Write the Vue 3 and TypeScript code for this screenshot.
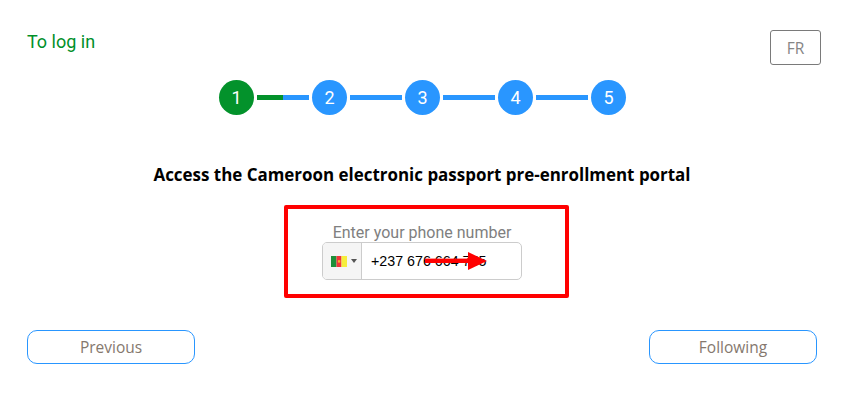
<script setup lang="ts">
const steps: number[] = [1, 2, 3, 4, 5];
</script>

<template>
  <div class="page">
    <header class="top">
      <a class="login">To log in</a>
      <button class="lang">FR</button>
    </header>

    <ol class="steps">
      <template v-for="n in steps" :key="n">
        <li class="circle" :class="{ active: n === 1 }">{{ n }}</li>
        <li v-if="n < 5" class="line" :class="{ half: n === 1 }"></li>
      </template>
    </ol>

    <h1 class="title">Access the Cameroon electronic passport pre-enrollment portal</h1>

    <section class="highlight">
      <label class="label">Enter your phone number</label>
      <div class="phone">
        <div class="flag-box">
          <svg class="flag" width="16" height="11" viewBox="0 0 16 11">
            <rect width="5.5" height="11" fill="#1f8f3a" />
            <rect x="5.5" width="5" height="11" fill="#f2343a" />
            <rect x="10.5" width="5.5" height="11" fill="#f6ee3c" />
            <rect x="6.9" y="4.2" width="2.4" height="2.4" fill="#f7b52e" />
          </svg>
          <span class="caret"></span>
        </div>
        <span class="number">+237 676 664 755</span>
        <svg class="arrow" width="64" height="18" viewBox="0 0 64 18">
          <rect x="0" y="6.6" width="45" height="4.4" fill="#ff0000" />
          <polygon points="43,0 62,9 43,18" fill="#ff0000" />
        </svg>
      </div>
    </section>

    <footer class="actions">
      <button class="nav">Previous</button>
      <button class="nav">Following</button>
    </footer>
  </div>
</template>

<style scoped>
.page {
  width: 864px;
  height: 416px;
  box-sizing: border-box;
  padding: 30px 47px 0 27px;
  background: #fff;
  font-family: Roboto, "Liberation Sans", sans-serif;
  overflow: hidden;
}
.top {
  display: flex;
  justify-content: space-between;
  align-items: flex-start;
  height: 35px;
  margin-right: -4px;
}
.login {
  color: #009029;
  font-size: 18px;
  line-height: 23px;
}
.lang {
  width: 51px;
  height: 35px;
  padding: 0;
  border: 1px solid #7a7a7a;
  border-radius: 3px;
  background: #fff;
  color: #858585;
  font-family: "Open Sans", sans-serif;
  font-size: 15.5px;
}
.steps {
  display: flex;
  align-items: center;
  justify-content: center;
  list-style: none;
  margin: 15px 0 0;
  padding: 0 0 0 1px;
}
.circle {
  width: 35px;
  height: 35px;
  border-radius: 50%;
  background: #2996ff;
  color: #fff;
  font-size: 18px;
  line-height: 35px;
  text-align: center;
}
.circle.active {
  background: #03922b;
}
.line {
  width: 52px;
  height: 5px;
  margin: 0 3px;
  background: #2996ff;
}
.line.half {
  background: linear-gradient(to right, #03922b 50%, #2996ff 50%);
}
.title {
  margin: 49px 0 0;
  text-align: center;
  color: #000;
  font-family: "Open Sans", sans-serif;
  font-size: 16.95px;
  font-weight: 700;
  line-height: 22px;
}
.highlight {
  width: 285px;
  height: 93px;
  box-sizing: border-box;
  margin: 19px 0 0 257px;
  border: 4px solid #ff0000;
  border-radius: 2px;
  display: flex;
  flex-direction: column;
  align-items: center;
  padding: 14px 9px 0 0;
}
.label {
  color: #808080;
  font-size: 16px;
  line-height: 19px;
}
.phone {
  position: relative;
  display: flex;
  align-items: center;
  width: 200px;
  height: 38px;
  box-sizing: border-box;
  border: 1px solid #ccc;
  border-radius: 5px;
}
.flag-box {
  display: flex;
  align-items: center;
  width: 39px;
  height: 100%;
  box-sizing: border-box;
  padding-left: 8px;
  gap: 4px;
  background: #f5f5f5;
  border-right: 1px solid #ccc;
  border-radius: 4px 0 0 4px;
}
.flag {
  display: block;
}
.caret {
  width: 0;
  height: 0;
  border-left: 3px solid transparent;
  border-right: 3px solid transparent;
  border-top: 4px solid #555;
}
.number {
  margin-left: 9px;
  color: #000;
  font-family: "Liberation Sans", Arial, sans-serif;
  font-size: 14.25px;
}
.arrow {
  position: absolute;
  left: 102px;
  top: 9px;
}
.actions {
  display: flex;
  justify-content: space-between;
  margin-top: 32px;
}
.nav {
  width: 168px;
  height: 34px;
  padding: 0;
  border: 1px solid #2996ff;
  border-radius: 10px;
  background: #fff;
  color: #85786e;
  font-family: "Open Sans", sans-serif;
  font-size: 15.5px;
}
</style>
